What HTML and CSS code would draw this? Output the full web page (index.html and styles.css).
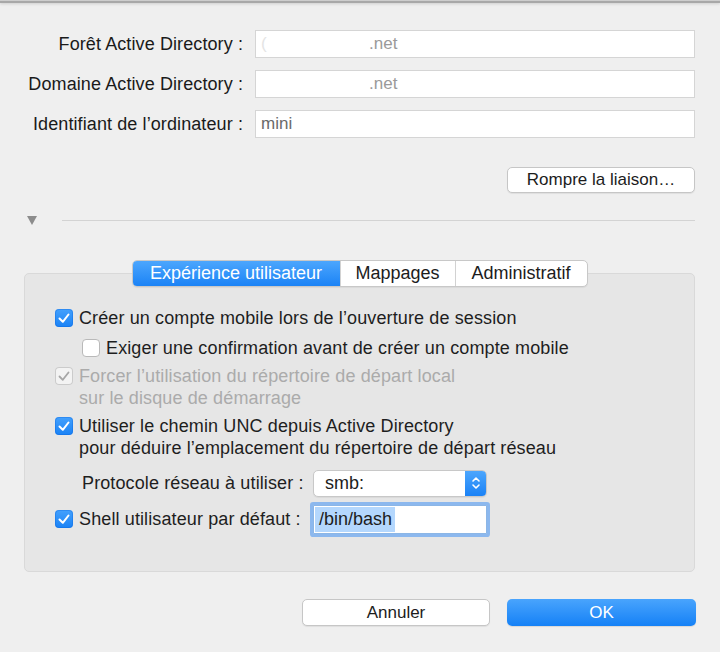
FILE: index.html
```html
<!DOCTYPE html>
<html lang="fr">
<head>
<meta charset="utf-8">
<title>Active Directory</title>
<link rel="stylesheet" href="styles.css">
</head>
<body>
<div class="edge"></div>
<main class="sheet">
  <section class="binding">
    <span class="key">Forêt Active Directory :</span>
    <div class="field"><span class="ghost">(</span><span class="val val-net">.net</span></div>
    <span class="key">Domaine Active Directory :</span>
    <div class="field"><span class="val val-net2">.net</span></div>
    <span class="key">Identifiant de l’ordinateur :</span>
    <div class="field"><span class="val val-dark">mini</span></div>
  </section>

  <div class="actions-top">
    <button class="btn btn-unbind" type="button">Rompre la liaison…</button>
  </div>

  <div class="disclosure">
    <svg class="tri" width="10" height="9" viewBox="0 0 10 9"><polygon points="0,0 10,0 5,9" fill="#8c8c8c"/></svg>
    <span class="rule"></span>
  </div>

  <section class="tabview">
    <div class="segments">
      <div class="seg seg-1 on">Expérience utilisateur</div>
      <div class="seg seg-2">Mappages</div>
      <div class="seg seg-3">Administratif</div>
    </div>

    <div class="pane">
      <div class="opt">
        <span class="check on"><svg viewBox="0 0 18 18"><path d="M4.5 9.5 L7.8 12.8 L13.5 5.5" fill="none" stroke="#fff" stroke-width="2" stroke-linecap="round" stroke-linejoin="round"/></svg></span>
        <span class="txt">Créer un compte mobile lors de l’ouverture de session</span>
      </div>
      <div class="opt sub">
        <span class="check off"></span>
        <span class="txt">Exiger une confirmation avant de créer un compte mobile</span>
      </div>
      <div class="opt gap6 dim">
        <span class="check dimmed"><svg viewBox="0 0 18 18"><path d="M4.5 9.5 L7.8 12.8 L13.5 5.5" fill="none" stroke="#a6a6a6" stroke-width="1.8" stroke-linecap="round" stroke-linejoin="round"/></svg></span>
        <span class="txt">Forcer l’utilisation du répertoire de départ local<br>sur le disque de démarrage</span>
      </div>
      <div class="opt gap6">
        <span class="check on"><svg viewBox="0 0 18 18"><path d="M4.5 9.5 L7.8 12.8 L13.5 5.5" fill="none" stroke="#fff" stroke-width="2" stroke-linecap="round" stroke-linejoin="round"/></svg></span>
        <span class="txt">Utiliser le chemin UNC depuis Active Directory<br>pour déduire l’emplacement du répertoire de départ réseau</span>
      </div>

      <div class="ctl-row proto">
        <div class="ctl-label"><span class="txt indent">Protocole réseau à utiliser :</span></div>
        <div class="popup">
          <span class="popup-val">smb:</span>
          <span class="stepper"><svg width="10" height="16" viewBox="0 0 10 16"><path d="M2 6 L5 3 L8 6 M2 10 L5 13 L8 10" fill="none" stroke="#fff" stroke-width="1.6" stroke-linecap="round" stroke-linejoin="round"/></svg></span>
        </div>
      </div>

      <div class="ctl-row shell">
        <div class="ctl-label">
          <span class="check on"><svg viewBox="0 0 18 18"><path d="M4.5 9.5 L7.8 12.8 L13.5 5.5" fill="none" stroke="#fff" stroke-width="2" stroke-linecap="round" stroke-linejoin="round"/></svg></span>
          <span class="txt">Shell utilisateur par défaut :</span>
        </div>
        <div class="textbox focused"><span class="sel">/bin/bash</span></div>
      </div>
    </div>
  </section>

  <div class="actions-bottom">
    <button class="btn btn-cancel" type="button">Annuler</button>
    <button class="btn btn-ok" type="button">OK</button>
  </div>
</main>
</body>
</html>
```

FILE: styles.css
```css
* { box-sizing: border-box; }

html, body {
  margin: 0;
  padding: 0;
}

body {
  width: 720px;
  height: 652px;
  overflow: hidden;
  background: #efefef;
  font-family: "Liberation Sans", Arial, sans-serif;
  font-size: 18px;
  color: #1e1e1e;
}

/* window edge at the top of the sheet */
.edge {
  height: 3px;
  border-top: 1px solid #cdcdcd;
  background: #a8a8a8;
  box-shadow: 0 1px 3px rgba(0, 0, 0, 0.14);
}

.sheet {
  display: flex;
  flex-direction: column;
}

/* binding information */
.binding {
  display: grid;
  grid-template-columns: 243px 440px;
  column-gap: 12px;
  row-gap: 12px;
  align-items: center;
  margin-top: 27px;
}

.key {
  text-align: right;
  white-space: nowrap;
  color: #1a1a1a;
  letter-spacing: 0.1px;
}

.field {
  height: 28px;
  background: #fff;
  border: 1px solid #d5d5d5;
  display: flex;
  align-items: center;
  padding-left: 5px;
  font-size: 17px;
}

.ghost {
  color: #e4e4e4;
  width: 108px;
}

.val { color: #9a9a9a; }
.val-net2 { margin-left: 108px; }
.val-dark { color: #6a6a6a; }

/* buttons */
.btn {
  font-family: inherit;
  font-size: 17px;
  color: #1c1c1c;
  background: #fff;
  border: 1px solid #c6c6c6;
  border-radius: 5px;
  box-shadow: 0 1px 1px rgba(0, 0, 0, 0.07);
  padding: 0;
}

.actions-top {
  display: flex;
  justify-content: flex-end;
  padding-right: 25px;
  margin-top: 29px;
}

.btn-unbind {
  width: 188px;
  height: 26px;
}

/* disclosure */
.disclosure {
  display: flex;
  align-items: center;
  height: 20px;
  margin: 17px 25px 0 27px;
}

.tri { flex: none; margin-right: 25px; }

.rule {
  flex: 1;
  height: 1px;
  background: #d3d3d3;
}

/* tab view */
.tabview {
  margin: 43px 25px 0 24px;
  height: 299px;
  background: #e6e6e6;
  border: 1px solid #d9d9d9;
  border-radius: 5px;
}

.segments {
  display: flex;
  width: 456px;
  height: 27px;
  margin: -14px auto 0;
  background: #fff;
  border: 1px solid #c8c8c8;
  border-radius: 5px;
  overflow: hidden;
  box-shadow: 0 1px 1px rgba(0, 0, 0, 0.06);
}

.seg {
  display: flex;
  align-items: center;
  justify-content: center;
  font-size: 18px;
  color: #1c1c1c;
}

.seg + .seg { border-left: 1px solid #d2d2d2; }
.seg-1 { width: 207px; }
.seg-2 { width: 115px; }
.seg-3 { flex: 1; }

.seg.on {
  background: linear-gradient(#4ca6fd, #1b83f6);
  color: #fff;
}

.pane {
  padding: 20px 0 0 30px;
  display: flex;
  flex-direction: column;
}

.opt {
  display: flex;
  gap: 6px;
  line-height: 22px;
}

.opt .check { margin-top: 2px; }
.opt.sub { margin-top: 8px; padding-left: 27px; }
.opt.gap6 { margin-top: 6px; }
.opt.dim .txt { color: #ababab; }

.txt { white-space: nowrap; letter-spacing: 0.12px; }

.check {
  flex: none;
  width: 18px;
  height: 18px;
  border-radius: 4px;
  display: block;
}

.check svg { display: block; width: 18px; height: 18px; }

.check.on {
  background: linear-gradient(#44a1fd, #1a82f5);
  box-shadow: inset 0 0 0 1px rgba(10, 100, 220, 0.35);
}

.check.off {
  background: #fff;
  border: 1px solid #b9b9b9;
}

.check.dimmed {
  background: #f3f3f3;
  box-shadow: inset 0 0 0 1px #cbcbcb;
}

/* labelled controls */
.ctl-row {
  display: flex;
  align-items: center;
  height: 28px;
}

.ctl-row.proto { margin-top: 10px; }
.ctl-row.shell { margin-top: 8px; }

.ctl-label {
  width: 258px;
  display: flex;
  align-items: center;
  gap: 6px;
}

.indent { padding-left: 27px; }

.popup {
  width: 174px;
  height: 27px;
  display: flex;
  background: #fff;
  border: 1px solid #c8c8c8;
  border-radius: 5px;
  overflow: hidden;
  box-shadow: 0 1px 1px rgba(0, 0, 0, 0.06);
}

.popup-val {
  flex: 1;
  display: flex;
  align-items: center;
  padding-left: 11px;
  font-size: 18px;
  color: #1c1c1c;
}

.stepper {
  width: 21px;
  display: flex;
  align-items: center;
  justify-content: center;
  background: linear-gradient(#4ca6fd, #1a82f6);
}

.textbox {
  width: 174px;
  height: 29px;
  background: #fff;
  border: 1px solid #8cb6e6;
  display: flex;
  align-items: stretch;
  padding: 1px 0 1px 1px;
  font-size: 18px;
}

.textbox.focused {
  box-shadow: 0 0 0 3px rgba(110, 168, 240, 0.75);
  border-radius: 1px;
}

.sel {
  display: flex;
  align-items: center;
  padding: 0 3px 0 4px;
  background: #b4d7fd;
  color: #1c1c1c;
}

/* dialog buttons */
.actions-bottom {
  display: flex;
  justify-content: flex-end;
  gap: 17px;
  margin-top: 27px;
  padding-right: 24px;
}

.btn-cancel {
  width: 188px;
  height: 27px;
}

.btn-ok {
  width: 189px;
  height: 27px;
  border: none;
  color: #fff;
  background: linear-gradient(#49a4fd, #1581f6);
  box-shadow: 0 1px 1px rgba(0, 0, 0, 0.1);
}
```
